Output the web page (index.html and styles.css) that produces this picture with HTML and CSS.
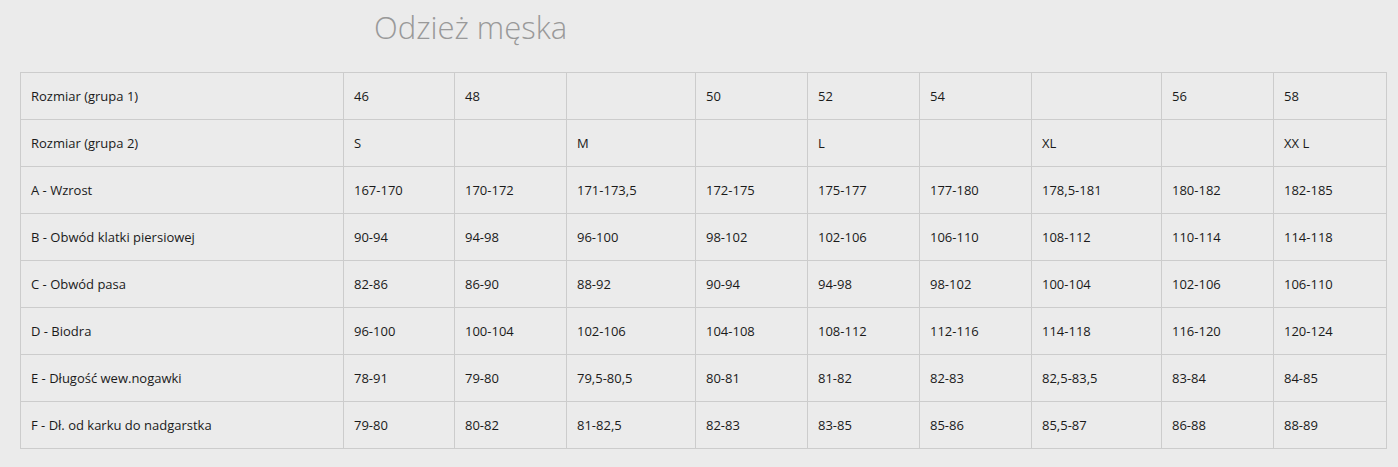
FILE: index.html
```html
<!DOCTYPE html>
<html lang="pl">
<head>
<meta charset="utf-8">
<title>Odzież męska</title>
<link rel="stylesheet" href="styles.css">
</head>
<body>
<div class="page">
  <h1 class="title">Odzież męska</h1>
  <table class="sizes">
    <colgroup>
      <col class="c-label">
      <col class="c-a"><col class="c-b"><col class="c-wide"><col class="c-b"><col class="c-b"><col class="c-b"><col class="c-wide2"><col class="c-b"><col class="c-last">
    </colgroup>
    <tbody>
      <tr><td>Rozmiar (grupa 1)</td><td>46</td><td>48</td><td></td><td>50</td><td>52</td><td>54</td><td></td><td>56</td><td>58</td></tr>
      <tr><td>Rozmiar (grupa 2)</td><td>S</td><td></td><td>M</td><td></td><td>L</td><td></td><td>XL</td><td></td><td>XX L</td></tr>
      <tr><td>A - Wzrost</td><td>167-170</td><td>170-172</td><td>171-173,5</td><td>172-175</td><td>175-177</td><td>177-180</td><td>178,5-181</td><td>180-182</td><td>182-185</td></tr>
      <tr><td>B - Obwód klatki piersiowej</td><td>90-94</td><td>94-98</td><td>96-100</td><td>98-102</td><td>102-106</td><td>106-110</td><td>108-112</td><td>110-114</td><td>114-118</td></tr>
      <tr><td>C - Obwód pasa</td><td>82-86</td><td>86-90</td><td>88-92</td><td>90-94</td><td>94-98</td><td>98-102</td><td>100-104</td><td>102-106</td><td>106-110</td></tr>
      <tr><td>D - Biodra</td><td>96-100</td><td>100-104</td><td>102-106</td><td>104-108</td><td>108-112</td><td>112-116</td><td>114-118</td><td>116-120</td><td>120-124</td></tr>
      <tr><td>E - Długość wew.nogawki</td><td>78-91</td><td>79-80</td><td>79,5-80,5</td><td>80-81</td><td>81-82</td><td>82-83</td><td>82,5-83,5</td><td>83-84</td><td>84-85</td></tr>
      <tr><td>F - Dł. od karku do nadgarstka</td><td>79-80</td><td>80-82</td><td>81-82,5</td><td>82-83</td><td>83-85</td><td>85-86</td><td>85,5-87</td><td>86-88</td><td>88-89</td></tr>
    </tbody>
  </table>
</div>
</body>
</html>
```

FILE: styles.css
```css
html, body {
  margin: 0;
  padding: 0;
  background: #ebebeb;
}

.page {
  padding: 6px 20px 0 20px;
  font-family: "Open Sans", "Liberation Sans", sans-serif;
}

.title {
  margin: 0 0 24px 354px;
  font-size: 31px;
  font-weight: 300;
  line-height: 42px;
  color: #999999;
}

.sizes {
  border-collapse: collapse;
  table-layout: fixed;
  width: 1367px;
}

.sizes td {
  border: 1px solid #cccccc;
  padding: 0 10px;
  height: 47px;
  box-sizing: border-box;
  font-size: 13px;
  color: #1a1a1a;
  vertical-align: middle;
}

.c-label { width: 323px; }
.c-a { width: 111px; }
.c-b { width: 112px; }
.c-wide { width: 129px; }
.c-wide2 { width: 130px; }
.c-last { width: 113px; }
```
